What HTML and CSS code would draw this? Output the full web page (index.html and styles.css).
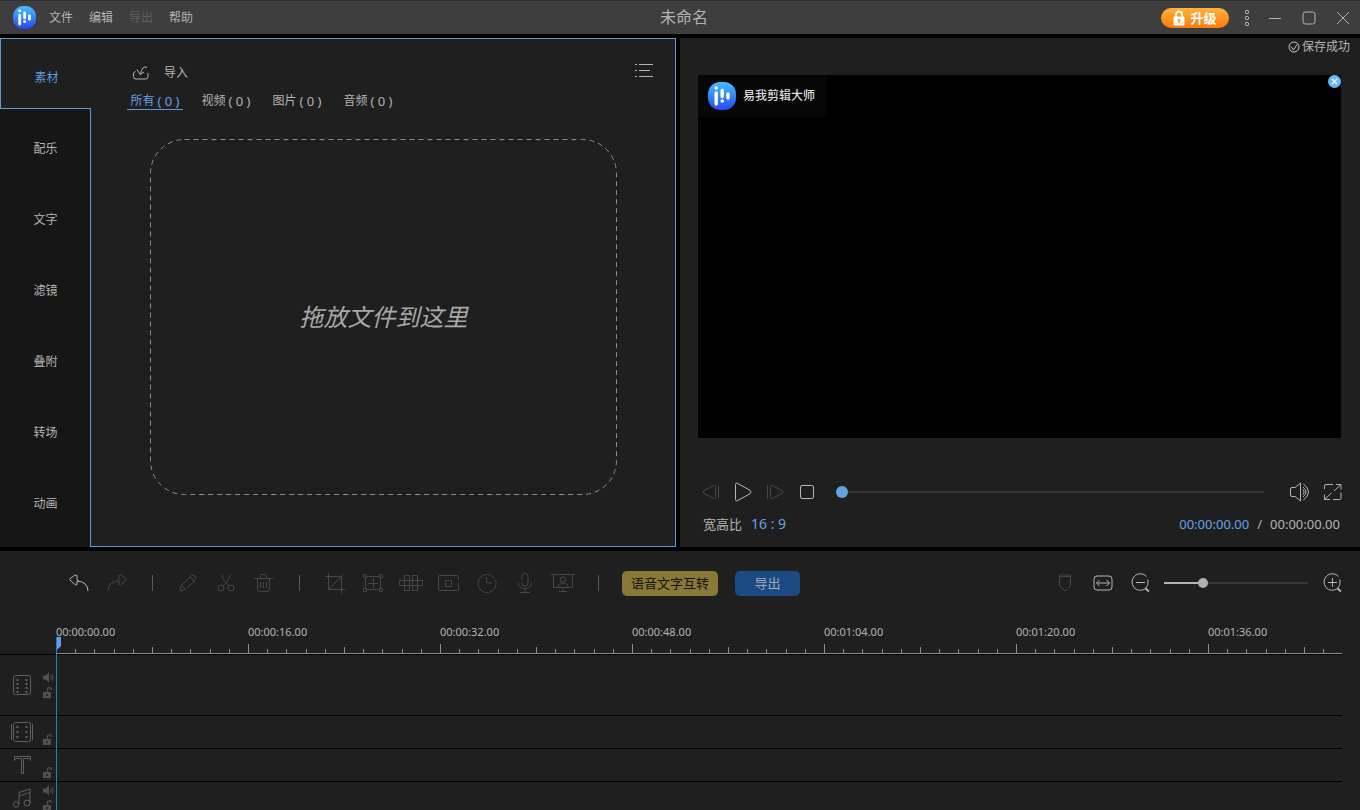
FILE: index.html
```
<!DOCTYPE html>
<html lang="zh-CN">
<head>
    <meta charset="UTF-8">
    <meta name="viewport" content="width=device-width, initial-scale=1.0">
    <title>易我剪辑大师</title>
    <link rel="stylesheet" href="styles.css">
</head>
<body>
    <!-- shared shapes -->
    <svg class="defs" aria-hidden="true">
        <defs>
            <linearGradient id="logoFill" x1="0" y1="0" x2="0" y2="1">
                <stop offset="0" stop-color="#4dbaff"/>
                <stop offset="0.5" stop-color="#2f88fb"/>
                <stop offset="1" stop-color="#2a45f5"/>
            </linearGradient>
            <pattern id="ticks" width="192" height="13" patternUnits="userSpaceOnUse">
                <path d="M.5 3v10M19.5 8v5M38.5 8v5M58.5 8v5M77.5 8v5M96.5 6v7M115.5 8v5M134.5 8v5M154.5 8v5M173.5 8v5" stroke="#8c8c8c"/>
            </pattern>
        </defs>
        <symbol id="logo" viewBox="0 0 28 28">
            <rect width="28" height="28" rx="12" fill="url(#logoFill)"/>
            <g stroke="#fff" stroke-width="3.4" stroke-linecap="round">
                <path d="M8.2 11v11M14.2 8.500v6M20 12v4"/>
            </g>
            <circle cx="8.2" cy="6" r="1.8" fill="#fff"/>
            <circle cx="14.2" cy="19" r="1.8" fill="#fff"/>
        </symbol>
        <symbol id="speaker" viewBox="0 0 11 11">
            <path d="M0 3.500h2.500L6 .5v10L2.500 7.500H0z" fill="currentColor"/>
            <path d="M7.500 3.500q1.500 2 0 4M9 2q2 3.500 0 7" stroke="currentColor" fill="none"/>
        </symbol>
        <symbol id="lock" viewBox="0 0 11 11">
            <path d="M0 5h8v6H0z" fill="currentColor"/>
            <path d="M4.500 5V2.500Q4.500 .7 6.500 .7T8.500 3" stroke="currentColor" stroke-width="1.300" fill="none"/>
            <path d="M3.200 7h1.600v2H3.200z" fill="#1f1f1f"/>
        </symbol>
    </svg>

    <header class="titlebar">
        <div class="menu">
            <svg class="logo"><use href="#logo"/></svg>
            <button>文件</button>
            <button>编辑</button>
            <button disabled>导出</button>
            <button>帮助</button>
        </div>
        <h1 class="title">未命名</h1>
        <div class="window-buttons">
            <button class="upgrade">
                <svg width="12" height="16" viewBox="0 0 12 16"><path d="M3 7V4.500a3 3 0 0 1 6 0V7" fill="none" stroke="#fff" stroke-width="1.800"/><rect x=".5" y="6.500" width="11" height="9" rx="1" fill="#fff"/><path d="M6 9v4M4.500 10h3" stroke="#ff9a1e" stroke-width="1.400"/></svg>
                升级
            </button>
            <button class="more" aria-label="更多"><svg width="6" height="18"><g fill="none" stroke="#b4b4b4"><circle cx="3" cy="3" r="1.700"/><circle cx="3" cy="9" r="1.700"/><circle cx="3" cy="15" r="1.700"/></g></svg></button>
            <button aria-label="最小化"><svg width="14" height="14"><path d="M1 7.500h12" stroke="#b4b4b4"/></svg></button>
            <button aria-label="最大化"><svg width="14" height="14"><rect x="1" y="1" width="12" height="12" rx="2.500" fill="none" stroke="#b4b4b4"/></svg></button>
            <button aria-label="关闭"><svg width="14" height="14"><path d="M1 1l12 12M13 1L1 13" stroke="#b4b4b4"/></svg></button>
        </div>
    </header>

    <main class="workspace">
        <section class="library">
            <nav class="side-tabs">
                <button class="active">素材</button>
                <button>配乐</button>
                <button>文字</button>
                <button>滤镜</button>
                <button>叠附</button>
                <button>转场</button>
                <button>动画</button>
                <div class="side-fill"></div>
            </nav>
            <div class="media">
                <div class="media-head">
                    <button class="import">
                        <svg width="16" height="14" viewBox="0 0 16 14" fill="none" stroke="currentColor"><path d="M2.500 5.500Q.5 6 .5 8v2.500q0 2.500 2.500 2.500h9.500q2.500 0 2.500-2.500V7"/><path d="M14 1.500q-2-1.500-4 .5T7.500 8.500M4 3.500l3 5 4-2.500"/></svg>
                        导入
                    </button>
                    <button class="list-view" aria-label="列表视图"><svg width="20" height="16" stroke="currentColor"><path d="M1 1.500h2M5 1.500h14M1 7.500h2M5 7.500h11M1 13.500h2M5 13.500h14"/></svg></button>
                </div>
                <div class="filters">
                    <button class="active">所有 <span>( 0 )</span></button>
                    <button>视频 <span>( 0 )</span></button>
                    <button>图片 <span>( 0 )</span></button>
                    <button>音频 <span>( 0 )</span></button>
                </div>
                <div class="drop-area">
                    <svg class="drop-border"><rect x=".5" y=".5" rx="34"/></svg>
                    <p>拖放文件到这里</p>
                </div>
            </div>
        </section>

        <section class="preview">
            <div class="save-status">
                <svg width="12" height="12" fill="none" stroke="#c8c8c8"><circle cx="6" cy="6" r="5"/><path d="M3 5.500l2.500 3.500L9 3.500"/></svg>
                保存成功
            </div>
            <div class="video">
                <div class="watermark">
                    <svg class="watermark-logo"><use href="#logo"/></svg>
                    易我剪辑大师
                </div>
                <button class="remove-mark" aria-label="去除水印"><svg width="13" height="13"><circle cx="6.500" cy="6.500" r="6.500" fill="#66b9fa"/><path d="M4 4l5 5M9 4L4 9" stroke="#fff" stroke-width="1.200"/></svg></button>
            </div>
            <div class="player">
                <button disabled aria-label="上一帧"><svg width="18" height="16"><path d="M13.500 2.500v11q0 1.500-1.500 1L2 9.500Q0 8 2 6.500l10-5q1.500-.5 1.500 1zM16.500 1v14"/></svg></button>
                <button aria-label="播放"><svg width="18" height="20"><path d="M1.500 2.500q0-2 2-1.200l12.500 7q2 1.700 0 3.400l-12.500 7q-2 .8-2-1.200z"/></svg></button>
                <button disabled aria-label="下一帧"><svg width="18" height="16"><path d="M4.500 2.500v11q0 1.500 1.500 1l10-5q2-1.500 0-3l-10-5q-1.500-.5-1.500 1zM1.500 1v14"/></svg></button>
                <button aria-label="停止"><svg width="16" height="16"><rect x="1.500" y="1.500" width="13" height="13" rx="1.500"/></svg></button>
                <input class="seek" type="range" min="0" max="100" value="0" aria-label="播放进度">
                <button aria-label="音量"><svg width="24" height="20"><path d="M1.500 7q0-1.500 1.500-1.500h3L11.500 1v18L6 14.500H3Q1.500 14.500 1.500 13zM14 7.500q2.500 2.500 0 5M14 5q6 5 0 10M14.500 2q10 8 0 16"/></svg></button>
                <button aria-label="全屏"><svg width="18" height="18"><path d="M.5 6V3Q.5 1.500 2 1.500h7M12 1.500h5v5M17 9.500V15q0 1.500-1.500 1.500H9M6 16.500H.5v-5M17 1.500l-7 6.500M.5 16.500l7-6.500"/></svg></button>
            </div>
            <div class="player-info">
                <span>宽高比</span>
                <button class="ratio">16 : 9</button>
                <div class="time"><b>00:00:00.00</b><span>/</span><span>00:00:00.00</span></div>
            </div>
        </section>
    </main>

    <section class="timeline">
        <div class="toolbar">
            <button aria-label="撤销"><svg width="20" height="18"><path d="M19 17Q18.500 7.500 8 7v3.500L6.500 11 1 6q-.5-.7 0-1.300L6 1l2 .5V5q0 2 2 2"/></svg></button>
            <button disabled aria-label="重做"><svg width="20" height="18"><path d="M1 17Q1.500 7.500 12 7v3.500l1.500.5L19 6q.5-.7 0-1.300L14 1l-2 .5V5q0 2-2 2"/></svg></button>
            <i class="sep"></i>
            <button disabled aria-label="编辑"><svg width="18" height="18"><path d="M1 17l1.500-5.500L12.500 1.500q1.500-1.200 3.500.5t.5 3.500L6.500 15.500zM11 3l4 4M2.500 11.500l4 4"/></svg></button>
            <button disabled aria-label="剪切"><svg width="18" height="18"><path d="M5 1q0 4 7 11M13 1q0 4-7 11"/><circle cx="4" cy="14" r="3"/><circle cx="14" cy="14" r="3"/></svg></button>
            <button disabled aria-label="删除"><svg width="20" height="18"><path d="M0 4.500h19M6.500 4V2q0-1.500 1.500-1.500h3q1.500 0 1.500 1.500v2M3.500 5v10.500q0 2 2 2h8q2 0 2-2V5M6.500 8v6M9.500 8v6M12.500 8v6"/></svg></button>
            <i class="sep"></i>
            <button disabled aria-label="裁剪"><svg width="20" height="20"><path d="M3.500 0v16.500H20M0 3.500h16.500V20M18.500 1L4 16"/></svg></button>
            <button disabled aria-label="缩放"><svg width="20" height="20"><path d="M.5 1.500h3v3h-3zM16.500 1.500h3v3h-3zM.5 15.500h3v3h-3zM16.500 15.500h3v3h-3zM4 3.500h12M4 16.500h12M2.500 5v10M17.500 5v10M10.500 5v10M5 10.500h10"/></svg></button>
            <button disabled aria-label="马赛克"><svg width="24" height="18"><path d="M5.500 1.500h5v15h-5zM13.500 1.500h5v15h-5zM.5 6.500h23v5H.5z"/></svg></button>
            <button disabled aria-label="定格"><svg width="22" height="18"><path d="M20.500 6V3q0-1.500-1.500-1.500H2Q.5 1.500.5 3v12q0 1.500 1.500 1.500h17q1.500 0 1.500-1.500V9M7.500 6.500h6v6h-6z"/></svg></button>
            <button disabled aria-label="时长"><svg width="20" height="20"><path d="M17.500 5.500A9 9 0 1 0 19 10q0-1.500-.5-3M9.500 4v6H15"/></svg></button>
            <button disabled aria-label="录音"><svg width="16" height="20"><path d="M5 7V3q0-2.500 3-2.500T11 3v7q0 3-3 3t-3-3V9M1.500 10q0 5.500 6.500 5.500t6.500-5.500M8 16v3.500M3 19.500h10"/></svg></button>
            <button disabled aria-label="演示"><svg width="24" height="20"><path d="M0 1.500h24M2.500 2v12.500h19V2M12 15v3M8 18.500h8M7 14q0-4 5-4t5 4"/><circle cx="12" cy="6.500" r="2.700"/></svg></button>
            <i class="sep"></i>
            <button class="pill speech">语音文字互转</button>
            <button class="pill export">导出</button>

            <div class="zoom">
                <button disabled aria-label="标记"><svg width="14" height="18"><path d="M1.500 1h11v11L7 17l-5.500-5zM2 2.500h10"/></svg></button>
                <button aria-label="适应窗口"><svg width="20" height="16"><rect x="1" y="1" width="18" height="14" rx="3"/><path d="M4 8h12M6.500 5L3.500 8l3 3M13.500 5l3 3-3 3"/></svg></button>
                <button aria-label="缩小"><svg width="20" height="20"><path d="M15.500 3.500A8.300 8.300 0 1 0 14.500 15.500Q18 12 17 6.500M5 9.500h9"/><path d="M14.500 15.500L18 18.500" stroke-width="2"/></svg></button>
                <input class="zoom-range" type="range" min="0" max="100" value="25" aria-label="时间线缩放">
                <button aria-label="放大"><svg width="20" height="20"><path d="M15.500 3.500A8.300 8.300 0 1 0 14.500 15.500Q18 12 17 6.500M5 9.500h9M9.500 5v9"/><path d="M14.500 15.500L18 18.500" stroke-width="2"/></svg></button>
            </div>
        </div>

        <div class="ruler">
            <div class="ruler-labels">
                <span>00:00:00.00</span>
                <span>00:00:16.00</span>
                <span>00:00:32.00</span>
                <span>00:00:48.00</span>
                <span>00:01:04.00</span>
                <span>00:01:20.00</span>
                <span>00:01:36.00</span>
            </div>
            <svg class="ruler-ticks"><rect width="100%" height="13" fill="url(#ticks)"/></svg>
        </div>

        <div class="tracks">
            <div class="track main-track">
                <svg class="kind" width="22" height="20"><path d="M19.500 8V2.500q0-2-2-2h-13q-2 0-2 2v15q0 2 2 2h13q2 0 2-2V9l1.500-1.500"/><path d="M6.500 4v14M15.500 4v14" stroke-width="2" stroke-dasharray="2 2"/></svg>
                <div class="switches">
                    <button aria-label="静音"><svg><use href="#speaker"/></svg></button>
                    <button aria-label="锁定"><svg><use href="#lock"/></svg></button>
                </div>
            </div>
            <div class="track">
                <svg class="kind" width="22" height="20"><rect x="2.500" y=".5" width="17" height="19" rx="2"/><path d="M.5 2v16M21.500 2v16"/><path d="M6.500 4v14M15.500 4v14" stroke-width="2" stroke-dasharray="2 3"/></svg>
                <div class="switches">
                    <button aria-label="锁定"><svg><use href="#lock"/></svg></button>
                </div>
            </div>
            <div class="track">
                <svg class="kind" width="22" height="20"><path d="M3.500 5.500v-4h16v4l-1.500-2h-5.500v15h-2v-15H5z"/></svg>
                <div class="switches">
                    <button aria-label="锁定"><svg><use href="#lock"/></svg></button>
                </div>
            </div>
            <div class="track">
                <svg class="kind" width="22" height="20"><path d="M8 16V4.500L19 1v14M8 8l11-3.500"/><circle cx="5" cy="16.500" r="2.700"/><circle cx="16" cy="15" r="3"/></svg>
                <div class="switches">
                    <button aria-label="静音"><svg><use href="#speaker"/></svg></button>
                    <button aria-label="锁定"><svg><use href="#lock"/></svg></button>
                </div>
            </div>
        </div>
        <div class="playhead"><svg width="4" height="13"><path d="M0 0h4v9l-4 4z" fill="#5f9fe8"/></svg></div>
    </section>
</body>
</html>
```

FILE: styles.css
```
* {
    box-sizing: border-box;
}

body {
    margin: 0;
    height: 100vh;
    display: flex;
    flex-direction: column;
    gap: 4px;
    overflow: hidden;
    background: #000;
    color: #b4b4b4;
    font-family: "Noto Sans", "Noto Sans CJK SC", sans-serif;
    font-size: 12px;
    line-height: 18px;
}

button {
    padding: 0;
    border: none;
    background: none;
    color: inherit;
    font: inherit;
    display: flex;
    align-items: center;
    justify-content: center;
}

svg {
    display: block;
    flex: none;
}

.defs {
    position: absolute;
    width: 0;
    height: 0;
}

/* title bar */
.titlebar {
    flex: none;
    height: 34px;
    padding-left: 8px;
    display: grid;
    grid-template-columns: 1fr auto 1fr;
    align-items: center;
    background: #3e3e3e;
    border-top: 1px solid #303030;
}

.menu {
    display: flex;
    align-items: center;
    gap: 16px;
}

.menu button:disabled {
    color: #606060;
}

.logo {
    width: 23px;
    height: 23px;
    margin: 0 -3px 0 5px;
}

.title {
    margin: 0;
    padding-bottom: 2px;
    font-size: 16px;
    font-weight: normal;
    line-height: 24px;
}

.window-buttons {
    display: flex;
    align-items: center;
    justify-content: flex-end;
}

.window-buttons button {
    width: 34px;
    height: 32px;
}

.window-buttons .more {
    width: 22px;
}

.window-buttons .upgrade {
    width: 68px;
    height: 20px;
    margin-right: 7px;
    gap: 5px;
    border-radius: 10px;
    background: linear-gradient(#ffb43c, #ff7a08);
    color: #fff;
    font-size: 13px;
    font-weight: bold;
}

/* library + preview */
.workspace {
    flex: 1;
    min-height: 0;
    display: grid;
    grid-template-columns: calc(50% - 4px) 1fr;
    gap: 4px;
}

.library {
    display: flex;
    background: #1f1f1f;
}

.side-tabs {
    flex: none;
    width: 91px;
    display: flex;
    flex-direction: column;
}

.side-tabs button {
    height: 71px;
    padding: 9px 0 0 1px;
    background: #161616;
    border-right: 1px solid #5a9bdc;
}

.side-tabs .active {
    color: #5a9bdc;
    background: #1f1f1f;
    border: 1px solid #5a9bdc;
    border-right: none;
}

.side-fill {
    flex: 1;
    background: #161616;
    border-right: 1px solid #5a9bdc;
}

.media {
    flex: 1;
    display: flex;
    flex-direction: column;
    padding: 24px 21px 51px 36px;
    border: 1px solid #5a9bdc;
    border-left: none;
}

.media-head {
    display: flex;
    align-items: flex-start;
    justify-content: space-between;
}

.import {
    margin: 1px 0 0 6px;
    gap: 15px;
}

.filters {
    display: flex;
    gap: 15px;
    margin-top: 9px;
}

.filters button {
    width: 56px;
    height: 19px;
    padding-top: 1px;
    gap: 3px;
    border-bottom: 1px solid transparent;
}

.filters span {
    font-size: 13px;
}

.filters .active {
    color: #63a3e6;
    border-color: #5a9bdc;
}

.drop-area {
    position: relative;
    flex: 1;
    margin: 29px 37px 0 23px;
    display: flex;
    align-items: center;
    justify-content: center;
}

.drop-area p {
    margin: 0;
    font-size: 24px;
    font-style: italic;
    line-height: 36px;
    color: #a8a8a8;
}

.drop-border {
    position: absolute;
    inset: 0;
    width: 100%;
    height: 100%;
}

.drop-border rect {
    width: calc(100% - 1px);
    height: calc(100% - 1px);
    fill: none;
    stroke: #8c8c8c;
    stroke-dasharray: 5 4;
}

/* preview */
.preview {
    display: flex;
    flex-direction: column;
    padding: 0 18px;
    background: #1f1f1f;
}

.save-status {
    height: 37px;
    margin-right: -8px;
    display: flex;
    justify-content: flex-end;
    gap: 2px;
}

.save-status svg {
    margin-top: 3px;
}

.video {
    position: relative;
    flex: 1;
    margin-right: 1px;
    background: #000;
}

.watermark {
    width: 129px;
    height: 42px;
    padding-left: 10px;
    display: flex;
    align-items: center;
    gap: 7px;
    border-radius: 0 0 5px 0;
    background: #070707;
    color: #dcdcdc;
    font-weight: 500;
}

.watermark-logo {
    width: 28px;
    height: 28px;
}

.remove-mark {
    position: absolute;
    top: 0;
    right: 0;
}

.player {
    height: 32px;
    margin: 38px -7px 0 -3px;
    display: flex;
    align-items: center;
}

.player button {
    width: 32px;
    height: 32px;
}

.player svg,
.toolbar svg {
    fill: none;
    stroke: #b4b4b4;
}

.player button:disabled svg,
.toolbar button:disabled svg {
    stroke: #474747;
}

input[type="range"] {
    appearance: none;
    margin: 0;
    height: 12px;
    background: none;
}

input[type="range"]::-webkit-slider-runnable-track {
    height: 2px;
    background: #363636;
}

input[type="range"]::-webkit-slider-thumb {
    appearance: none;
    width: 12px;
    height: 12px;
    margin-top: -5px;
    border-radius: 50%;
    background: #63a3e0;
}

.player .seek {
    flex: 1;
    min-width: 0;
    margin: 0 21px 0 13px;
}

.player-info {
    height: 39px;
    padding: 7px 2px 0 5px;
    display: flex;
    align-items: flex-start;
    font-size: 13px;
}

.ratio {
    margin-left: 9px;
    color: #63a3e6;
    font-size: 14px;
}

.time {
    margin-left: auto;
    display: flex;
    gap: 8px;
}

.time b {
    color: #63a3e6;
    font-weight: normal;
}

/* timeline */
.timeline {
    position: relative;
    flex: none;
    height: 259px;
    overflow: hidden;
    background: #1f1f1f;
}

.toolbar {
    height: 64px;
    padding: 0 8px 0 60px;
    display: flex;
    align-items: center;
}

.toolbar button {
    width: 38px;
    height: 32px;
}

.sep {
    width: 1px;
    height: 16px;
    margin: 0 16px;
    background: #5a5a5a;
}

.toolbar .pill {
    height: 25px;
    border-radius: 5px;
    font-size: 13px;
}

.toolbar .speech {
    width: 96px;
    margin: 0 17px 0 7px;
    background: #8a7936;
    color: #141414;
}

.toolbar .export {
    width: 65px;
    background: #1c4b82;
    color: #a0a8b4;
}

.zoom {
    margin-left: auto;
    display: flex;
    align-items: center;
}

.zoom .zoom-range {
    width: 144px;
    margin: 0 6px 0 4px;
}

.zoom .zoom-range::-webkit-slider-runnable-track {
    background: linear-gradient(to right, #b4b4b4 27%, #363636 27%);
}

.zoom .zoom-range::-webkit-slider-thumb {
    width: 10px;
    height: 10px;
    margin-top: -4px;
    background: #b0b0b0;
}

.ruler {
    margin: 0 18px 0 56px;
}

.ruler-labels {
    height: 26px;
    padding-top: 8px;
    display: flex;
    overflow: hidden;
    font-size: 11px;
}

.ruler-labels span {
    flex: none;
    width: 192px;
}

.ruler-ticks {
    width: 100%;
    height: 13px;
    border-bottom: 1px solid #8c8c8c;
}

.tracks {
    margin-right: 18px;
    border-top: 1px solid #000;
}

.track {
    height: 33px;
    padding-left: 11px;
    display: flex;
    align-items: center;
    gap: 10px;
    border-bottom: 1px solid #000;
    color: #505050;
}

.main-track {
    height: 61px;
}

.kind {
    fill: none;
    stroke: #606060;
}

.switches {
    align-self: stretch;
    display: flex;
    flex-direction: column;
    justify-content: flex-end;
    gap: 4px;
    padding-bottom: 3px;
}

.main-track .switches {
    justify-content: center;
    padding-bottom: 0;
}

.switches svg {
    width: 11px;
    height: 11px;
}

.playhead {
    position: absolute;
    top: 86px;
    bottom: 0;
    left: 56px;
    border-left: 1px solid #1a86ba;
}
```
